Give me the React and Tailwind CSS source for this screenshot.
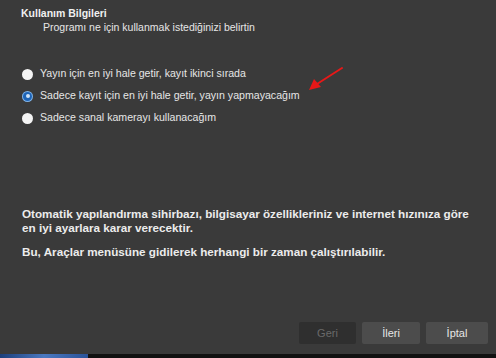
import { useState } from 'react'

const options = [
  'Yayın için en iyi hale getir, kayıt ikinci sırada',
  'Sadece kayıt için en iyi hale getir, yayın yapmayacağım',
  'Sadece sanal kamerayı kullanacağım',
]

const Radio = ({ checked, label, onClick }) => (
  <button onClick={onClick} className="flex items-center h-[22px] text-left">
    {checked ? (
      <span className="w-[11px] h-[11px] rounded-full bg-[#7fb4ea] flex items-center justify-center">
        <span className="w-[9px] h-[9px] rounded-full bg-[#1e64b6] flex items-center justify-center">
          <span className="w-[4px] h-[4px] rounded-full bg-[#cfe3f7]" />
        </span>
      </span>
    ) : (
      <span className="w-[11px] h-[11px] rounded-full bg-[#f4f4f4]" />
    )}
    <span className="ml-[7px] text-[10.6px] text-[#e6e6e6]">{label}</span>
  </button>
)

const App = () => {
  const [selected, setSelected] = useState(1)

  return (
    <div className="w-[496px] h-[358px] bg-[#3a3a3a] flex flex-col font-['Liberation_Sans',sans-serif] overflow-hidden">
      <div className="pl-[21px] pt-[6px]">
        <div className="text-[10.5px] font-bold text-[#f0f0f0] leading-[14px]">Kullanım Bilgileri</div>
        <div className="pl-[22px] text-[10.5px] text-[#e6e6e6] leading-[14px]">
          Programı ne için kullanmak istediğinizi belirtin
        </div>
      </div>

      <div className="relative flex flex-col pl-[22px] mt-[29px]">
        {options.map((opt, i) => (
          <Radio key={i} checked={selected === i} label={opt} onClick={() => setSelected(i)} />
        ))}
        <svg className="absolute left-[305px] top-[2px]" width="40" height="28" viewBox="0 0 40 28">
          <line x1="37" y1="3" x2="12" y2="19" stroke="#e81818" strokeWidth="2" strokeLinecap="round" />
          <polygon points="4,25 9,14 16,22" fill="#e81818" />
        </svg>
      </div>

      <div className="pl-[22px] pr-[18px] mt-[78px] text-[11.7px] font-bold text-[#ececec] leading-[14px]">
        <p>
          Otomatik yapılandırma sihirbazı, bilgisayar özellikleriniz ve internet hızınıza göre en iyi ayarlara karar verecektir.
        </p>
        <p className="mt-[10px]">Bu, Araçlar menüsüne gidilerek herhangi bir zaman çalıştırılabilir.</p>
      </div>

      <div className="mt-auto flex justify-end gap-[6px] pr-[8px] pb-[10px]">
        <button className="w-[57px] h-[22px] rounded-[2px] bg-[#2f2f2f] text-[11px] text-[#6a6a6a]">Geri</button>
        <button className="w-[58px] h-[22px] rounded-[2px] bg-[#4c4c4c] text-[11px] text-[#e6e6e6]">İleri</button>
        <button className="w-[62px] h-[22px] rounded-[2px] bg-[#4c4c4c] text-[11px] text-[#e6e6e6]">İptal</button>
      </div>
      <div className="h-[4px] bg-[#111] flex">
        <div className="w-[88px] bg-gradient-to-r from-[#1d3f7a] via-[#4a78c0] to-[#2a5298]" />
      </div>
    </div>
  )
}

export default App
